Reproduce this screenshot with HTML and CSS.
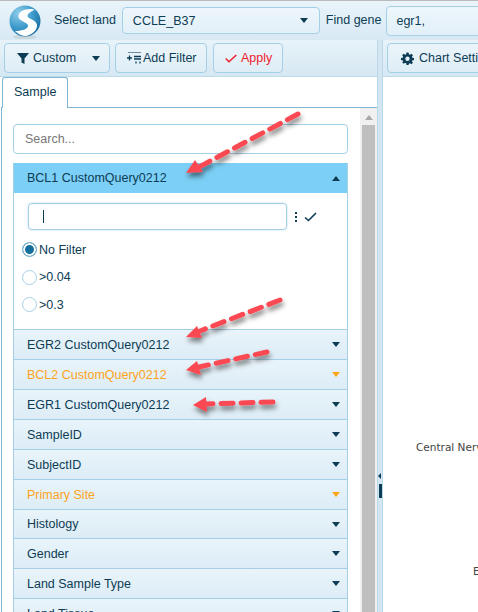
FILE: index.html
```html
<!DOCTYPE html>
<html lang="en">
<head>
  <meta charset="UTF-8" />
  <title>Land Explorer</title>
  <link rel="stylesheet" href="styles.css">
</head>
<body>
  <!-- Top bar -->
  <div class="topbar">
    <svg class="logo" width="32" height="34" viewBox="0 0 32 34">
      <defs>
        <radialGradient id="ball" cx="30%" cy="25%" r="85%">
          <stop offset="0" stop-color="#8fcdea"/>
          <stop offset="0.55" stop-color="#3d9acb"/>
          <stop offset="1" stop-color="#17689c"/>
        </radialGradient>
      </defs>
      <ellipse cx="16" cy="32" rx="12" ry="2" fill="#c9d6dc"/>
      <circle cx="16" cy="16" r="15.500" fill="url(#ball)"/>
      <path d="M25 4.500C17 3 9.500 6 9.500 11.500c0 5 9 5.500 9.500 9 .3 3-5 5.500-13 5.500 3 3 7 5 11 5 6-1 11.500-6 11-11-.6-5.500-9.500-6-9.500-9 0-2.500 3-4.500 7-6z" fill="#fff"/>
    </svg>
    <span class="divider"></span>
    <label class="top-label">Select land</label>
    <div class="land-select">
      <span>CCLE_B37</span>
      <i class="caret down dark"></i>
    </div>
    <label class="top-label">Find gene</label>
    <div class="gene-input">egr1,</div>
  </div>

  <div class="main">
    <!-- Left side: filters -->
    <div class="left">
      <div class="toolbar">
        <button class="btn btn-custom">
          <svg width="12" height="12" viewBox="0 0 12 12"><path d="M0 1h12L7.500 6.500V12l-3-1.500v-4z" fill="#0d3c55"/></svg>
          <span>Custom</span>
          <i class="caret down dark push"></i>
        </button>
        <button class="btn btn-add">
          <svg width="14" height="12" viewBox="0 0 14 12"><path d="M1 .5h13" stroke="#6d8a9b" fill="none"/><path d="M0 6h5M2.500 3.500v5M7 4.500h7M7 7h7" stroke="#0d3c55" stroke-width="1.300" fill="none"/><path d="M8 10.500h2M12 10.500h2" stroke="#5d7d90" stroke-width="2" fill="none"/></svg>
          <span>Add Filter</span>
        </button>
        <button class="btn btn-apply">
          <svg width="12" height="9" viewBox="0 0 12 9"><path d="M.7 4.500l3.300 3.200L11.300 1" stroke="#f01c2c" stroke-width="1.500" fill="none"/></svg>
          <span>Apply</span>
        </button>
      </div>

      <div class="tabs">
        <div class="tab">Sample</div>
      </div>

      <div class="tab-body">
        <div class="filters">
          <div class="search">Search...</div>

          <div class="accordion">
            <div class="acc-head open">BCL1 CustomQuery0212<i class="caret up dark"></i></div>
            <div class="acc-body">
              <div class="query-row">
                <div class="query-input"><span class="cursor"></span></div>
                <span class="dots"><b></b><b></b><b></b></span>
                <svg width="13" height="10" viewBox="0 0 13 10"><path d="M1 5.500l3.500 3L12 1" stroke="#0d3c55" stroke-width="1.600" fill="none"/></svg>
              </div>
              <div class="radio-row"><span class="radio on"></span>No Filter</div>
              <div class="radio-row"><span class="radio"></span>&gt;0.04</div>
              <div class="radio-row"><span class="radio"></span>&gt;0.3</div>
            </div>
            <div class="acc-head">EGR2 CustomQuery0212<i class="caret down dark"></i></div>
            <div class="acc-head active">BCL2 CustomQuery0212<i class="caret down orange"></i></div>
            <div class="acc-head">EGR1 CustomQuery0212<i class="caret down dark"></i></div>
            <div class="acc-head">SampleID<i class="caret down dark"></i></div>
            <div class="acc-head">SubjectID<i class="caret down dark"></i></div>
            <div class="acc-head active">Primary Site<i class="caret down orange"></i></div>
            <div class="acc-head short">Histology<i class="caret down dark"></i></div>
            <div class="acc-head">Gender<i class="caret down dark"></i></div>
            <div class="acc-head">Land Sample Type<i class="caret down dark"></i></div>
            <div class="acc-head">Land Tissue<i class="caret down dark"></i></div>
          </div>
        </div>

        <div class="scrollbar">
          <i class="caret up grey"></i>
          <div class="thumb"></div>
        </div>
      </div>
    </div>

    <!-- Splitter -->
    <div class="splitter">
      <i class="split-arrow"></i>
      <span class="split-grip"></span>
    </div>

    <!-- Right side: chart -->
    <div class="right">
      <div class="toolbar">
        <button class="btn btn-chart">
          <svg width="13" height="13" viewBox="0 0 24 24"><path fill="#0d3c55" fill-rule="evenodd" d="M10 1h4l.6 3.200 2 .8L19.300 3.200l2.800 2.800L20.200 8.700l.8 2L24 11v4l-3 .4-.8 2 1.900 2.600-2.800 2.800-2.700-1.900-2 .8L14 24h-4l-.4-3.200-2-.8-2.700 1.900-2.800-2.800L4 17.400l-.8-2L0 15v-4l3.200-.4.8-2L2.100 6l2.800-2.800L7.600 5l2-.8zM12 8.500a4 4 0 1 0 0 8 4 4 0 0 0 0-8z"/></svg>
          <span>Chart Settings</span>
        </button>
      </div>
      <div class="chart">
        <span class="chart-label label-cns">Central Nervous System</span>
        <span class="chart-label label-e">Endometrium</span>
      </div>
    </div>
  </div>

  <!-- Red annotation arrows drawn over the screenshot -->
  <svg class="arrows" width="478" height="612" viewBox="0 0 478 612">
    <defs>
      <filter id="shadow" x="-20%" y="-40%" width="140%" height="200%">
        <feDropShadow dx="1" dy="4" stdDeviation="2.500" flood-color="#000" flood-opacity="0.5"/>
      </filter>
    </defs>
    <g filter="url(#shadow)">
      <path d="M298 114L199 167" class="dash"/>
      <path d="M186 173l9-13 8 12z" class="head"/>
      <path d="M280 300L200 331" class="dash"/>
      <path d="M186 337l11-11 5 12z" class="head"/>
      <path d="M267 352L199 367" class="dash"/>
      <path d="M186 370l11-9 4 14z" class="head"/>
      <path d="M273 402L205 404" class="dash"/>
      <path d="M193 405l13-8 1 15z" class="head"/>
    </g>
  </svg>
</body>
</html>
```

FILE: styles.css
```css
* {
  box-sizing: border-box;
}

body {
  margin: 0;
  width: 478px;
  height: 612px;
  overflow: hidden;
  position: relative;
  background: #fff;
  font-family: "Liberation Sans", Arial, sans-serif;
  font-size: 12.5px;
  color: #0d3c55;
}

/* Top bar */
.topbar {
  height: 40px;
  display: flex;
  align-items: center;
  padding-left: 9px;
  border-top: 1px solid #bbb;
  background: linear-gradient(#e9f4fa, #d8e9f4);
  white-space: nowrap;
}

.logo {
  flex: none;
  margin-top: 3px;
}

.divider {
  width: 1px;
  height: 24px;
  margin: 0 6px 0 7px;
  background: #b5d3e4;
}

.top-label {
  margin: 0 6px 2px 0;
}

.land-select {
  flex: none;
  width: 198px;
  height: 27px;
  margin-right: 6px;
  padding: 0 11px 0 10px;
  display: flex;
  align-items: center;
  justify-content: space-between;
  border: 1px solid #a5cfe6;
  border-radius: 4px;
  background: linear-gradient(#edf6fb, #e2f0f8);
}

.gene-input {
  flex: none;
  width: 110px;
  height: 30px;
  margin-left: -1px;
  padding: 0 9px;
  line-height: 28px;
  border: 1px solid #a5cfe6;
  border-radius: 4px;
  background: linear-gradient(#edf6fb, #e2f0f8);
}

/* Carets */
.caret {
  display: block;
  flex: none;
  width: 0;
  height: 0;
  border-left: 4px solid transparent;
  border-right: 4px solid transparent;
}

.caret.down.dark { border-top: 5px solid #0d3c55; }
.caret.down.orange { border-top: 5px solid #ffa31a; }
.caret.up.dark { border-bottom: 5px solid #0d3c55; }
.caret.up.grey { border-bottom: 5px solid #a8a8a8; }

/* Main panes */
.main {
  display: flex;
  height: 572px;
}

.left {
  width: 377px;
  flex: none;
  display: flex;
  flex-direction: column;
}

.splitter {
  width: 6px;
  flex: none;
  position: relative;
  background: #d3e6f2;
  border-left: 1px solid #b9d9ea;
  border-right: 1px solid #b9d9ea;
}

.split-arrow {
  position: absolute;
  left: 0;
  top: 433px;
  border-top: 3px solid transparent;
  border-bottom: 3px solid transparent;
  border-right: 3px solid #0d3c55;
}

.split-grip {
  position: absolute;
  left: 1px;
  top: 444px;
  width: 3px;
  height: 14px;
  background: #0d3c55;
}

.right {
  flex: 1;
  min-width: 0;
  display: flex;
  flex-direction: column;
}

.toolbar {
  height: 37px;
  flex: none;
  display: flex;
  align-items: center;
  gap: 5px;
  padding: 0 4px;
  border-bottom: 1px solid #bcdcec;
  background: linear-gradient(#e7f3f9, #d6e8f3);
  white-space: nowrap;
}

.btn {
  height: 30px;
  flex: none;
  display: flex;
  align-items: center;
  gap: 4px;
  padding: 0 8px;
  border: 1px solid #a5cfe6;
  border-radius: 4px;
  background: linear-gradient(#ebf5fa, #deedf6);
  color: #0d3c55;
  font: inherit;
}

.btn svg {
  flex: none;
}

.btn-custom {
  width: 106px;
  padding: 0 9px 0 12px;
  gap: 4px;
}

.push {
  margin-left: auto;
}

.btn-add {
  width: 92px;
  padding: 0 11px;
  gap: 2px;
}

.btn-apply {
  width: 70px;
  padding: 0 11px;
  margin-left: 1px;
  color: #f01c2c;
}

.btn-chart {
  padding: 0 13px;
  gap: 5px;
  width: 130px;
}

/* Tabs */
.tabs {
  height: 31px;
  flex: none;
  padding-left: 2px;
  display: flex;
}

.tab {
  width: 66px;
  height: 31px;
  padding-left: 11px;
  line-height: 29px;
  background: #fff;
  border: 1px solid #7fb6d4;
  border-bottom: 0;
  border-radius: 3px 3px 0 0;
  position: relative;
  z-index: 1;
}

.tab-body {
  flex: 1;
  min-height: 0;
  display: flex;
  margin-top: -1px;
  margin-left: 1px;
  border-top: 1px solid #7fb6d4;
  border-left: 1px solid #7fb6d4;
  overflow: hidden;
}

.filters {
  flex: 1;
  min-width: 0;
  padding: 16px 12px 0 11px;
}

.search {
  height: 30px;
  padding-left: 11px;
  line-height: 28px;
  color: #777;
  border: 1px solid #a5cfe6;
  border-radius: 4px;
}

.accordion {
  margin-top: 9px;
  border-left: 1px solid #a5cfe6;
  border-right: 1px solid #a5cfe6;
}

.acc-head {
  height: 30px;
  display: flex;
  align-items: center;
  justify-content: space-between;
  padding: 0 7px 0 13px;
  border-bottom: 1px solid #a5cfe6;
  background: linear-gradient(#e9f4fa, #dcecf6);
  white-space: nowrap;
}

.acc-head.short {
  height: 29px;
}

.acc-head.open {
  background: #7ccff6;
  border-bottom: 0;
}

.acc-head.active {
  color: #ffa31a;
}

.acc-body {
  height: 137px;
  padding: 10px 0 0 14px;
  border-bottom: 1px solid #a5cfe6;
}

.query-row {
  display: flex;
  align-items: center;
  height: 27px;
}

.query-input {
  width: 259px;
  height: 27px;
  padding: 6px 0 0 14px;
  border: 1px solid #a5cfe6;
  border-radius: 4px;
  box-shadow: 0 0 2px #a5cfe6;
}

.cursor {
  display: block;
  width: 1px;
  height: 13px;
  background: #0d3c55;
}

.dots {
  display: flex;
  flex-direction: column;
  gap: 2px;
  margin: 0 7px 0 8px;
}

.dots b {
  display: block;
  width: 2px;
  height: 2px;
  background: #0d3c55;
}

.radio-row {
  height: 27.500px;
  margin-left: -6px;
  display: flex;
  align-items: center;
}

.query-row + .radio-row {
  margin-top: 6px;
}

.radio {
  width: 15px;
  height: 15px;
  margin-right: 2px;
  border: 1px solid #a5cfe6;
  border-radius: 50%;
}

.radio.on {
  background: #156f9c;
  box-shadow: inset 0 0 0 2px #fff;
  border-color: #7fb6d4;
}

/* Scrollbar */
.scrollbar {
  width: 17px;
  flex: none;
  background: #f0f0f0;
  padding: 7px 2px 0 2px;
  display: flex;
  flex-direction: column;
  align-items: center;
}

.thumb {
  width: 13px;
  flex: 1;
  margin-top: 5px;
  background: #bfbfbf;
}

/* Chart */
.chart {
  flex: 1;
  position: relative;
  overflow: hidden;
}

.chart-label {
  position: absolute;
  font-family: "DejaVu Sans", sans-serif;
  font-size: 10.5px;
  color: #444;
  white-space: nowrap;
}

.label-cns {
  left: 33px;
  top: 364px;
}

.label-e {
  left: 90px;
  top: 488px;
}

/* Annotation arrows */
.arrows {
  position: absolute;
  left: 0;
  top: 0;
  pointer-events: none;
}

.dash {
  fill: none;
  stroke: #fb4a52;
  stroke-width: 5;
  stroke-linecap: round;
  stroke-dasharray: 12 8;
}

.head {
  fill: #fb4a52;
}
```
